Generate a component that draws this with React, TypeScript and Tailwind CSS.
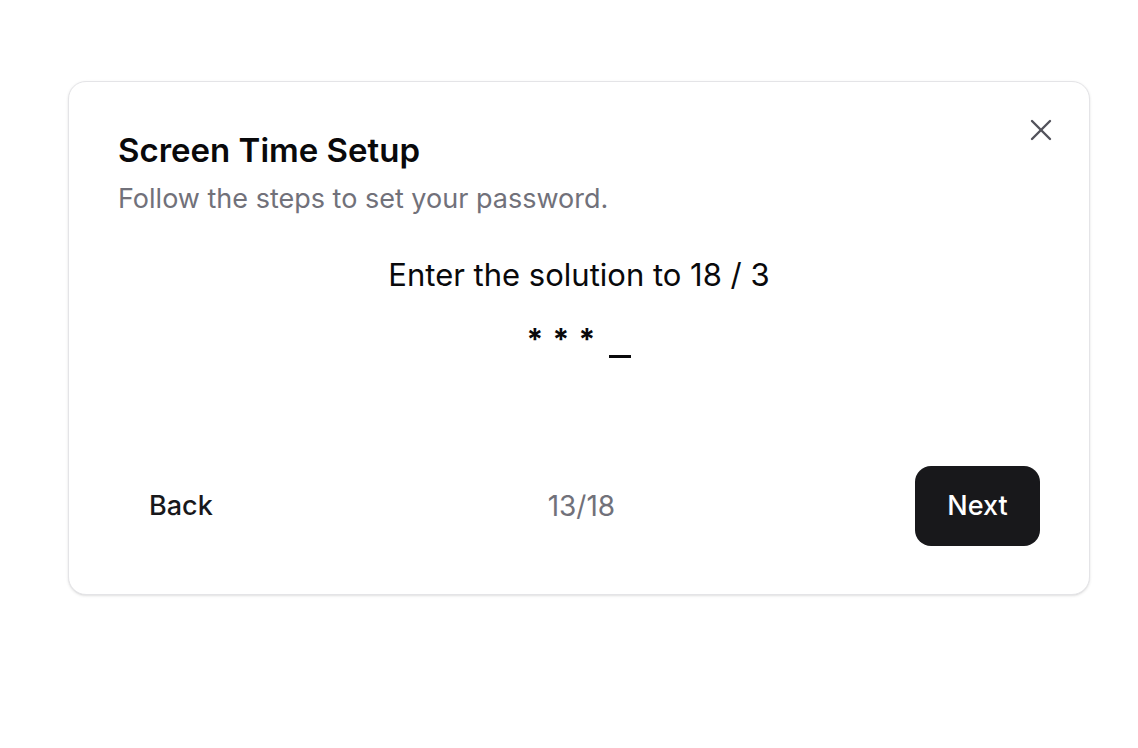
import React from "react";

export default function App() {
  return (
    <div className="w-[1138px] h-[748px] bg-white pl-[68px] pt-[81px]" style={{ fontFamily: "Inter, 'Noto Sans', sans-serif" }}>
      <div className="relative w-[1022px] h-[514px] rounded-[18px] border border-[#e4e4e7] bg-white shadow-sm px-[49px] pt-[48px] pb-[48px] flex flex-col">
        <button className="absolute right-[30px] top-[30px] w-[36px] h-[36px] flex items-center justify-center text-[#52525b]">
          <svg width="36" height="36" viewBox="0 0 24 24" fill="none" stroke="currentColor" strokeWidth="1.6" strokeLinecap="round" strokeLinejoin="round">
            <path d="M18 6 6 18" />
            <path d="m6 6 12 12" />
          </svg>
        </button>
        <h2 className="text-[33px] leading-[40px] font-semibold text-[#09090b]">Screen Time Setup</h2>
        <p className="text-[27px] leading-[36px] text-[#71717a] mt-[11px]">Follow the steps to set your password.</p>
        <div className="flex flex-col items-center mt-[38px]">
          <p className="text-[31px] leading-[40px] text-[#09090b]">Enter the solution to 18 / 3</p>
          <div className="mt-[24px] h-[40px] flex items-start pr-[5px] text-[#09090b]">
            <span className="w-[26px] text-center text-[30px] leading-[40px] font-bold">*</span>
            <span className="w-[26px] text-center text-[30px] leading-[40px] font-bold">*</span>
            <span className="w-[26px] text-center text-[30px] leading-[40px] font-bold">*</span>
            <span className="ml-[9px] mt-[36px] w-[22px] h-[3px] bg-[#09090b]" />
          </div>
        </div>
        <div className="mt-auto flex items-center justify-between">
          <button className="h-[80px] px-[31px] text-[27px] font-medium text-[#18181b] rounded-[16px]">Back</button>
          <span className="text-[28px] text-[#71717a] ml-[4px]">13/18</span>
          <button className="h-[80px] w-[125px] rounded-[16px] bg-[#18181b] text-white text-[27px] font-medium">Next</button>
        </div>
      </div>
    </div>
  );
}
